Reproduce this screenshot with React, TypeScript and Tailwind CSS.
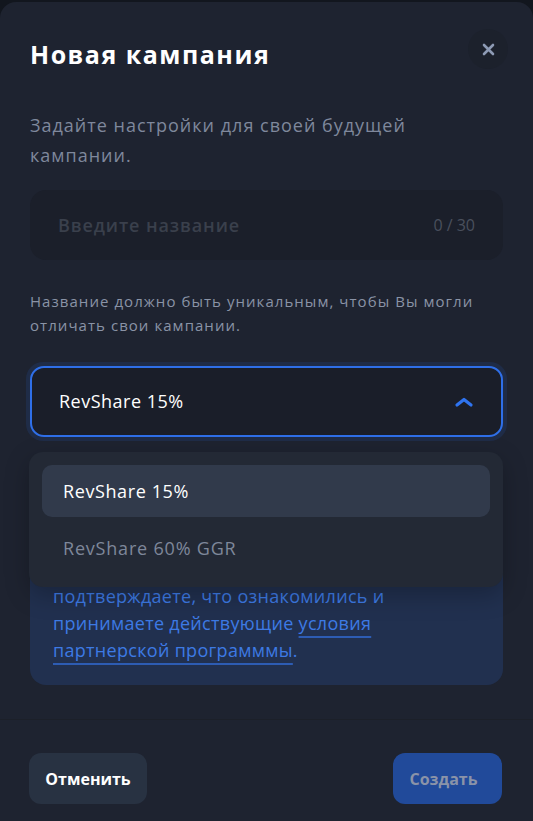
import React from "react";

export default function App() {
  const font = { fontFamily: '"Open Sans", "Noto Sans", sans-serif' };
  return (
    <div className="min-h-[821px] w-[533px] bg-[#12161e] pt-[2px] overflow-hidden" style={font}>
      <div className="h-[819px] rounded-t-[16px] bg-[#1e2330] flex flex-col">
        <div className="flex justify-between items-start pl-[30px] pr-[25px] pt-[27px]">
          <h1 className="text-[25px] leading-[40px] font-bold text-white mt-[5px] tracking-[1.5px]">Новая кампания</h1>
          <button className="w-[40px] h-[40px] rounded-full bg-[#1c212c] flex items-center justify-center">
            <svg width="13" height="13" viewBox="0 0 13 13">
              <path d="M2 2 L11 11 M11 2 L2 11" stroke="#8d9ab4" strokeWidth="2.6" strokeLinecap="round" />
            </svg>
          </button>
        </div>
        <div className="px-[30px]">
          <p className="mt-[36px] text-[18px] leading-[30px] text-[#7f889c] tracking-[1px] pr-[60px]">
            Задайте настройки для своей будущей кампании.
          </p>
          <div className="mt-[20px] h-[70px] rounded-[16px] bg-[#1b1f2a] flex items-center justify-between pl-[28px] pr-[28px]">
            <span className="text-[18px] font-semibold text-[#3a404c] tracking-[0.9px]">Введите название</span>
            <span className="text-[16px] text-[#4a505d]">0 / 30</span>
          </div>
          <p className="mt-[29px] text-[15px] leading-[24px] text-[#8a93a6] tracking-[1.05px]">
            Название должно быть уникальным, чтобы Вы могли отличать свои кампании.
          </p>
          <div className="relative mt-[25px]">
            <div className="rounded-[17px] p-[4px] bg-[#1f2c47] -mx-[4px]">
              <div className="h-[71px] rounded-[14px] border-2 border-[#2f6fe8] bg-[#1a1e29] flex items-center justify-between pl-[27px] pr-[27px]">
                <span className="text-[18px] font-medium text-white tracking-[0.5px]">RevShare 15%</span>
                <svg width="20" height="12" viewBox="0 0 20 12">
                  <path d="M3 9 L10 3.5 L17 9" fill="none" stroke="#2f74f0" strokeWidth="3.2" strokeLinecap="round" strokeLinejoin="round" />
                </svg>
              </div>
            </div>
            <div className="absolute z-10 left-[-1px] right-0 top-[90px] rounded-[14px] bg-[#232935] p-[13px] h-[135px] shadow-[0_8px_24px_rgba(0,0,0,0.25)]">
              <div className="h-[52px] rounded-[10px] bg-[#313a4b] flex items-center pl-[21px] text-[18px] text-white tracking-[0.6px]">
                RevShare 15%
              </div>
              <div className="h-[62px] flex items-center pl-[21px] text-[18px] text-[#7e879a] tracking-[0.8px]">
                RevShare 60% GGR
              </div>
            </div>
          </div>
          <div className="mt-[25px] h-[219px] rounded-[16px] bg-[#21304f] flex flex-col justify-end pl-[23px] pr-[34px] pb-[21px]">
            <p className="text-[18px] leading-[27px] text-[#3d7ae4] tracking-[0.3px]">
              Нажимая на кнопку «Создать», Вы подтверждаете, что ознакомились и принимаете действующие{" "}
              <span className="underline decoration-[#2d5cb3] decoration-2 underline-offset-[6px]">
                условия партнерской программмы
              </span>
              .
            </p>
          </div>
        </div>
        <div className="mt-[34px] border-t border-[#1c2029] flex justify-between items-start px-[29px] pt-[33px]">
          <button className="h-[51px] w-[118px] rounded-[12px] bg-[#283242] text-white font-bold text-[16px]">
            Отменить
          </button>
          <button className="h-[51px] w-[109px] pr-[8px] rounded-[12px] bg-[#214a9a] text-[#8a93a8] font-bold text-[16px] mr-[2px]">
            Создать
          </button>
        </div>
      </div>
    </div>
  );
}
